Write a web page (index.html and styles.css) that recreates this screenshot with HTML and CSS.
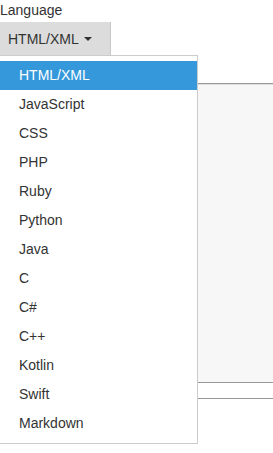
FILE: index.html
```html
<!doctype html>
<html lang="en">

<head>
  <meta charset="UTF-8">
  <meta name="viewport" content="width=device-width, initial-scale=1">
  <title>Language</title>
  <link rel="stylesheet" href="styles.css">
</head>

<body>
  <div class="panel">
    <label class="label">Language</label>
    <div class="toolbar">
      <div class="dropdown">
        <button class="toggle">HTML/XML<span class="caret"></span></button>
        <ul class="menu">
          <li class="item active">HTML/XML</li>
          <li class="item">JavaScript</li>
          <li class="item">CSS</li>
          <li class="item">PHP</li>
          <li class="item">Ruby</li>
          <li class="item">Python</li>
          <li class="item">Java</li>
          <li class="item">C</li>
          <li class="item">C#</li>
          <li class="item">C++</li>
          <li class="item">Kotlin</li>
          <li class="item">Swift</li>
          <li class="item">Markdown</li>
        </ul>
      </div>
    </div>
    <div class="editor"></div>
    <div class="status"></div>
  </div>
</body>

</html>
```

FILE: styles.css
```css
html,
body {
  min-height: 453px;
}

body {
  margin: 0;
  font: 400 14px/20px "Liberation Sans", Arial, sans-serif;
  color: #333;
  background: #fff;
}

.panel {
  min-height: 453px;
}

.label {
  display: block;
  height: 22px;
  line-height: 22px;
  margin-top: -1px;
  padding-bottom: 1px;
}

.toolbar {
  height: 61px;
}

.dropdown {
  position: relative;
}

.toggle {
  display: flex;
  align-items: center;
  height: 34px;
  width: 111px;
  padding: 0 0 0 8px;
  margin: 0;
  border: 0;
  border-right: 1px solid #c8c8c8;
  background: #dcdcdc;
  font: inherit;
  color: #333;
}

.caret {
  display: inline-block;
  margin-left: 5px;
  margin-top: -1px;
  border-top: 4px solid #333;
  border-left: 4px solid transparent;
  border-right: 4px solid transparent;
}

.menu {
  position: absolute;
  top: 33px;
  left: -1px;
  z-index: 2;
  width: 197px;
  margin: 0;
  padding: 5px 0;
  list-style: none;
  background: #fff;
  border: 1px solid #ccc;
}

.item {
  height: 29px;
  line-height: 29px;
  padding-left: 19px;
}

.item.active {
  background: #3498db;
  color: #fff;
}

.editor {
  height: 298px;
  border-top: 1px solid #999;
  background: #f7f7f7;
  box-shadow: inset 0 1px 0 #ddd;
}

.status {
  height: 15px;
  border-top: 1px solid #999;
  border-bottom: 1px solid #999;
}
```
